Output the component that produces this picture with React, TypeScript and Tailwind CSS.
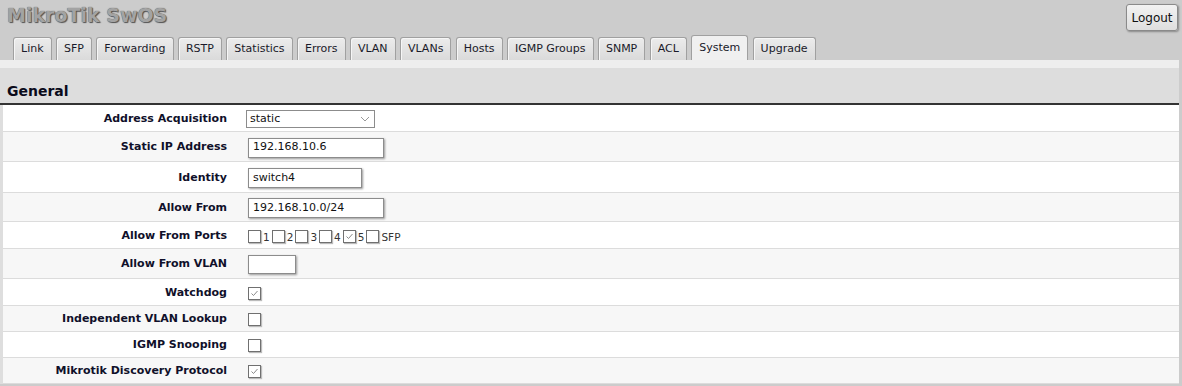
import React from "react";

const tabs = ["Link", "SFP", "Forwarding", "RSTP", "Statistics", "Errors", "VLAN", "VLANs", "Hosts", "IGMP Groups", "SNMP", "ACL", "System", "Upgrade"];

function Check({ checked }: { checked?: boolean }) {
  return (
    <span className="inline-flex h-[13px] w-[13px] shrink-0 items-center justify-center border border-[#707070] bg-white shadow-[1px_1px_1px_#bbb]">
      {checked && (
        <svg width="11" height="11" viewBox="0 0 11 11" fill="none">
          <path d="M2.5 5.5 L4.5 7.5 L8.5 3" stroke="#8a8a8a" strokeWidth="1" />
        </svg>
      )}
    </span>
  );
}

function TextBox({ value, w }: { value: string; w: string }) {
  return (
    <div className={`ml-[2px] flex h-[20px] items-center border border-[#8c8c8c] bg-white pl-[4px] text-[11px] text-[#111] shadow-[1px_1px_2px_#999] ${w}`}>
      {value}
    </div>
  );
}

function Row({ label, h, alt, children }: { label: string; h: string; alt?: boolean; children: React.ReactNode }) {
  return (
    <div className={`flex items-center border-b border-[#dcdcdc] pt-[2px] ${h} ${alt ? "bg-[#f7f7f7]" : "bg-white"}`}>
      <div className="w-[224px] shrink-0 text-right text-[11px] font-bold text-[#10102a]">{label}</div>
      <div className="ml-[19px] flex items-center">{children}</div>
    </div>
  );
}

export default function App() {
  return (
    <div className="min-h-[386px] bg-[#cccccc] font-['DejaVu_Sans',Verdana,sans-serif]">
      {/* header */}
      <div className="flex h-[35px] items-start justify-between">
        <div className="pl-[7px] pt-[1px] text-[19px] font-bold text-[#a3a3a3] [text-shadow:0_0_1px_#444,1px_1px_1px_#555]">
          MikroTik SwOS
        </div>
        <button className="mr-[4px] mt-[4px] h-[27px] w-[52px] rounded-[3px] border border-[#8a8a8a] bg-gradient-to-b from-[#f2f2f2] to-[#dedede] text-[12px] text-[#111] shadow-[1px_1px_2px_#888]">
          Logout
        </button>
      </div>

      {/* tabs */}
      <div className="flex h-[25px] items-end gap-[4.4px] pl-[13px]">
        {tabs.map((t) => (
          <div
            key={t}
            className={
              t === "System"
                ? "flex h-[25px] items-center rounded-t-[3px] border border-b-0 border-[#a0a0a0] bg-[#f0f0f0] px-[7px] pt-[1px] text-[11px] text-[#1a1a2a]"
                : "flex h-[23px] items-center rounded-t-[3px] border border-b-0 border-[#a0a0a0] bg-gradient-to-b from-[#ececec] to-[#dadada] px-[7px] pt-[1px] text-[11px] text-[#1a1a2a] shadow-[inset_1px_1px_0_#f6f6f6]"
            }
          >
            {t}
          </div>
        ))}
      </div>

      {/* content */}
      <div className="mr-[3px]">
        <div className="h-[8px] bg-[#eeeeee]" />
        <div className="h-[37px] border-b-2 border-[#333] bg-[#dddddd] pl-[7px] pt-[15px] text-[14px] font-bold leading-[17px] text-[#0a0a1a]">
          General
        </div>
        <div className="border-l-[3px] border-[#dedede]">
          <Row label="Address Acquisition" h="h-[27px]">
            <div className="flex h-[18px] w-[129px] items-center justify-between border border-[#8c8c8c] bg-white pl-[3px] pr-[4px] text-[11px] text-[#111]">
              static
              <svg width="10" height="6" viewBox="0 0 10 6" fill="none">
                <path d="M1 1 L5 5 L9 1" stroke="#999" strokeWidth="1" />
              </svg>
            </div>
          </Row>
          <Row label="Static IP Address" h="h-[30px]" alt>
            <TextBox value="192.168.10.6" w="w-[136px]" />
          </Row>
          <Row label="Identity" h="h-[31px]">
            <TextBox value="switch4" w="w-[114px]" />
          </Row>
          <Row label="Allow From" h="h-[29px]" alt>
            <TextBox value="192.168.10.0/24" w="w-[136px]" />
          </Row>
          <Row label="Allow From Ports" h="h-[27px]">
            <div className="ml-[2px] flex items-end">
              {["1", "2", "3", "4", "5", "SFP"].map((p) => (
                <div key={p} className="flex items-end">
                  <Check checked={p === "5"} />
                  <span className="ml-[2px] mr-[2px] text-[10.5px] leading-[11px] text-[#333]">{p}</span>
                </div>
              ))}
            </div>
          </Row>
          <Row label="Allow From VLAN" h="h-[30px]" alt>
            <div className="ml-[2px] h-[19px] w-[48px] border border-[#8c8c8c] bg-white shadow-[1px_1px_2px_#999]" />
          </Row>
          <Row label="Watchdog" h="h-[27px]">
            <span className="ml-[2px] flex">
              <Check checked />
            </span>
          </Row>
          <Row label="Independent VLAN Lookup" h="h-[26px]" alt>
            <span className="ml-[2px] flex">
              <Check />
            </span>
          </Row>
          <Row label="IGMP Snooping" h="h-[26px]">
            <span className="ml-[2px] flex">
              <Check />
            </span>
          </Row>
          <Row label="Mikrotik Discovery Protocol" h="h-[26px]" alt>
            <span className="ml-[2px] flex">
              <Check checked />
            </span>
          </Row>
        </div>
      </div>
    </div>
  );
}
